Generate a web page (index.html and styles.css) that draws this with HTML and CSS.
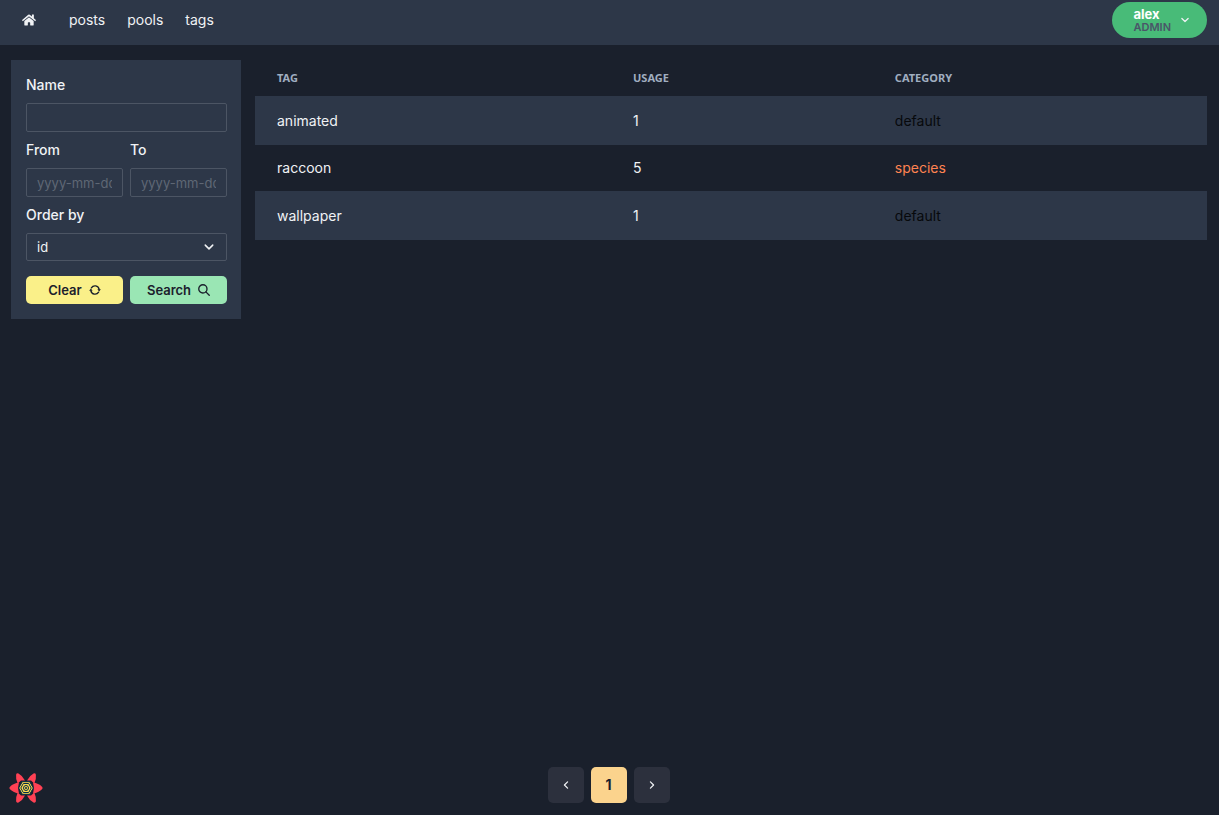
FILE: index.html
```html
<!DOCTYPE html>
<html lang="en">
<head>
<meta charset="utf-8">
<meta name="viewport" content="width=device-width, initial-scale=1">
<title>Tags</title>
<link rel="stylesheet" href="styles.css">
</head>
<body>
<header class="topbar">
  <nav class="nav">
    <a class="home" href="#" aria-label="Home">
      <svg class="home-icon" viewBox="0 0 576 512" fill="currentColor" aria-hidden="true"><path d="M280.4 148.300L96 300.100V464a16 16 0 0 0 16 16l112.100-.300a16 16 0 0 0 15.900-16V368a16 16 0 0 1 16-16h64a16 16 0 0 1 16 16v95.600a16 16 0 0 0 16 16.100L464 480a16 16 0 0 0 16-16V300L295.700 148.300a12.200 12.200 0 0 0-15.300 0zM571.600 251.500L488 182.600V44a12 12 0 0 0-12-12h-56a12 12 0 0 0-12 12v72.600L318.500 43a48 48 0 0 0-61 0L4.300 251.500a12 12 0 0 0-1.600 16.900l25.500 31a12 12 0 0 0 16.900 1.600l235.200-193.700a12.200 12.200 0 0 1 15.300 0L530.900 301a12 12 0 0 0 16.900-1.600l25.500-31a12 12 0 0 0-1.700-16.900z"/></svg>
    </a>
    <a class="nav-link" href="#">posts</a>
    <a class="nav-link" href="#">pools</a>
    <a class="nav-link" href="#">tags</a>
  </nav>
  <button class="user" type="button">
    <span class="user-text"><span class="user-name">alex</span><span class="user-role">ADMIN</span></span>
    <svg class="user-chevron" viewBox="0 0 16 16" aria-hidden="true"><path class="stroke" d="M3 5.500l5 5 5-5"/></svg>
  </button>
</header>

<main class="layout">
  <form class="filters">
    <div class="field wide">
      <label for="name">Name</label>
      <input class="control" id="name" type="text">
    </div>
    <div class="field">
      <label for="from">From</label>
      <input class="control" id="from" type="text" placeholder="yyyy-mm-dd">
    </div>
    <div class="field">
      <label for="to">To</label>
      <input class="control" id="to" type="text" placeholder="yyyy-mm-dd">
    </div>
    <div class="field wide">
      <label for="order">Order by</label>
      <div class="select-wrap">
        <select class="control select" id="order"><option>id</option></select>
        <svg class="select-chevron" viewBox="0 0 16 16" aria-hidden="true"><path class="stroke" d="M3 5.500l5 5 5-5"/></svg>
      </div>
    </div>
    <button class="btn clear" type="reset">Clear
      <svg class="btn-icon" viewBox="0 0 16 16" fill="currentColor" aria-hidden="true"><path d="M11.200 7h4.600l-2.300 3zM4.800 9H.2l2.300-3z"/><path class="stroke" d="M3.200 5.200A5.600 5.600 0 0 1 13.500 7M12.800 10.800A5.600 5.600 0 0 1 2.500 9"/></svg>
    </button>
    <button class="btn search" type="submit">Search
      <svg class="btn-icon" viewBox="0 0 16 16" aria-hidden="true"><circle class="stroke" cx="6.500" cy="6.500" r="5.500"/><path class="stroke" d="M10.500 10.500l4.500 4.500"/></svg>
    </button>
  </form>

  <section class="results">
    <table class="tags">
      <colgroup><col class="col-tag"><col class="col-usage"><col class="col-category"></colgroup>
      <thead><tr><th scope="col">Tag</th><th scope="col">Usage</th><th scope="col">Category</th></tr></thead>
      <tbody>
        <tr><td>animated</td><td>1</td><td class="default">default</td></tr>
        <tr><td>raccoon</td><td>5</td><td class="species">species</td></tr>
        <tr><td>wallpaper</td><td>1</td><td class="default">default</td></tr>
      </tbody>
    </table>
  </section>
</main>

<footer class="footer">
  <button class="devtools" type="button" aria-label="Open query devtools">
    <svg class="flower" viewBox="-18 -18 36 36" aria-hidden="true">
      <defs>
        <path id="side" d="M7 -5.500Q12.500 -4.800 16 -1.300Q17.400 0 16 1.300Q12.500 4.800 7 5.500L8 0Z"/>
        <path id="corner" d="M1 -7.500Q3.500 -12.500 7.500 -14.600Q9.500 -15.300 9.900 -13.300Q10.500 -9.500 8.300 -4.500L5 -7.500Z"/>
      </defs>
      <g class="petals">
        <use href="#side"/><use href="#side" transform="scale(-1 1)"/>
        <use href="#corner"/><use href="#corner" transform="scale(-1 1)"/>
        <use href="#corner" transform="scale(1 -1)"/><use href="#corner" transform="scale(-1 -1)"/>
      </g>
      <path class="core" d="M-3.700 -6.300H3.700L7.300 0L3.700 6.300H-3.700L-7.300 0Z"/>
      <path class="ring" d="M-2.700 -4.500H2.700L5.200 0L2.700 4.500H-2.700L-5.200 0Z"/>
      <circle class="ring" r="2.500"/><circle class="dot" r="1"/>
    </svg>
  </button>
  <nav class="pages" aria-label="Pagination">
    <button class="page" type="button" aria-label="Previous page"><svg class="page-icon" viewBox="0 0 16 16" aria-hidden="true"><path class="stroke" d="M10.500 3l-5 5 5 5"/></svg></button>
    <button class="page current" type="button" aria-current="page">1</button>
    <button class="page" type="button" aria-label="Next page"><svg class="page-icon" viewBox="0 0 16 16" aria-hidden="true"><path class="stroke" d="M5.500 3l5 5-5 5"/></svg></button>
  </nav>
</footer>
</body>
</html>
```
FILE: styles.css
```css
* { box-sizing: border-box; }

body {
  margin: 0;
  min-height: 100vh;
  display: flex;
  flex-direction: column;
  background: #1a202c;
  color: #f0f2f5;
  font: 14px/22px Inter, "Liberation Sans", sans-serif;
}

button, input, select { font: inherit; color: inherit; margin: 0; }
button { border: 0; cursor: pointer; }
svg { display: block; flex: none; }
.stroke { fill: none; stroke: currentColor; stroke-width: 2; stroke-linecap: round; stroke-linejoin: round; }

.topbar {
  display: flex;
  justify-content: space-between;
  align-items: flex-start;
  padding: 2px 12px 7px 22px;
  background: #2d3748;
}
.nav { display: flex; align-items: center; gap: 22px; height: 36px; }
.nav a { color: inherit; text-decoration: none; }
.home { margin-right: 11px; }
.home-icon { width: 14px; height: 14px; }

.user {
  display: flex;
  align-items: center;
  gap: 9px;
  height: 36px;
  padding: 0 17px 0 22px;
  border-radius: 18px;
  background: #48bb78;
  text-align: left;
}
.user-text { display: flex; flex-direction: column; font-weight: 700; }
.user-name { color: #fff; font-size: 13px; line-height: 14px; }
.user-role { color: #4a5568; font-size: 11px; line-height: 13px; font-weight: 600; }
.user-chevron { width: 10px; height: 10px; }

.layout {
  flex: 1;
  display: grid;
  grid-template-columns: 230px 1fr;
  align-items: start;
  gap: 14px;
  padding: 15px 12px 15px 11px;
}

.filters {
  display: grid;
  grid-template-columns: 1fr 1fr;
  gap: 7px;
  padding: 14px 14px 15px 15px;
  background: #2d3748;
}
.field { min-width: 0; }
.field label { display: block; margin-bottom: 7px; font-weight: 500; }
.wide { grid-column: 1 / -1; }
.control {
  display: block;
  width: 100%;
  height: 29px;
  padding: 0 10px;
  border: 1px solid #4c5564;
  border-radius: 2px;
  background: transparent;
  font-size: 13px;
}
.control::placeholder { color: #5f6775; opacity: 1; }
.select-wrap { position: relative; margin-bottom: 8px; }
.select { height: 28px; appearance: none; background: #2d3748; }
.select-chevron { position: absolute; right: 12px; top: 8px; width: 12px; height: 12px; pointer-events: none; }
.btn {
  display: flex;
  align-items: center;
  justify-content: center;
  gap: 7px;
  height: 28px;
  padding: 0;
  border-radius: 5px;
  color: #1a202c;
  font-size: 13px;
  font-weight: 600;
}
.clear { background: #faf089; }
.search { background: #9ae6b4; }
.btn-icon { width: 12px; height: 12px; }
.btn-icon .stroke { stroke-width: 1.8; }

.tags { width: 100%; table-layout: fixed; border-collapse: collapse; }
.col-tag { width: 37.4%; }
.col-usage { width: 27.500%; }
.tags th, .tags td { padding: 0 22px; text-align: left; }
.tags th {
  height: 36px;
  color: #a0aec0;
  font: 700 11px/14px "Noto Sans", sans-serif;
  text-transform: uppercase;
}
.tags td { height: 46px; }
.tags tbody tr:nth-child(odd) td { height: 49px; background: #2d3748; }
.tags tbody .default { color: #07090c; }
.tags tbody .species { color: #ff8351; }

.footer {
  display: grid;
  grid-template-columns: 1fr auto 1fr;
  align-items: end;
  padding: 0 10px 9px 8px;
}
.devtools { justify-self: start; padding: 0; background: none; }
.flower { width: 36px; height: 36px; }
.petals { fill: #ff4154; }
.core { fill: #ffd94c; stroke: #002c4b; stroke-width: 1; }
.ring { fill: none; stroke: #002c4b; stroke-width: 1; }
.dot { fill: #002c4b; }
.pages { display: flex; gap: 7px; padding-bottom: 3px; }
.page {
  display: grid;
  place-items: center;
  width: 36px;
  height: 36px;
  padding: 0;
  border-radius: 5px;
  background: #2c303d;
}
.current { background: #fbd38d; color: #1a202c; font-weight: 700; }
.page-icon { width: 10px; height: 10px; }
```
